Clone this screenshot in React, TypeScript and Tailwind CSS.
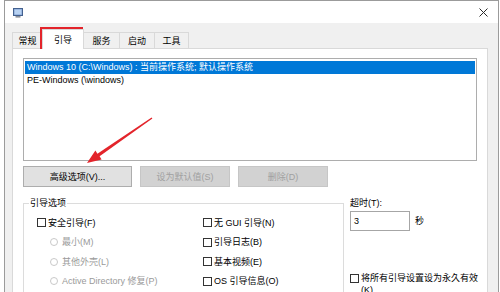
import React from "react";

function Check({ label }: { label: string }) {
  return (
    <div className="flex h-[19.5px] items-center">
      <span className="h-[9px] w-[9px] shrink-0 border border-[#333333] bg-white" />
      <span className="ml-[2px] whitespace-nowrap">{label}</span>
    </div>
  );
}

function Radio({ label }: { label: string }) {
  return (
    <div className="flex h-[19.5px] items-center pl-[13px] text-[#9a9a9a]">
      <span className="h-[8px] w-[8px] shrink-0 rounded-full border border-[#c9c9c9] bg-white" />
      <span className="ml-[4px] whitespace-nowrap">{label}</span>
    </div>
  );
}

export default function App() {
  return (
    <div className="relative h-[292px] w-[500px] overflow-hidden bg-white pl-[4px] text-[9px] leading-[12px] text-black font-[family-name:'Liberation_Sans','Noto_Sans_CJK_SC',sans-serif]">
      <div className="flex h-[300px] w-[495px] flex-col border-l border-r border-t border-[#9b9b9b]">
        {/* Title bar */}
        <div className="flex h-[22px] shrink-0 items-center justify-between bg-white pl-[8px] pr-[10px]">
          <svg width="10" height="10" viewBox="0 0 10 10" className="mt-[1px]">
            <rect x="0.5" y="0.5" width="9" height="7" fill="#7f9fd0" stroke="#44618f" />
            <rect x="1.5" y="1.5" width="7" height="5" fill="#b8d2f2" />
            <rect x="2.5" y="8" width="5" height="1.6" fill="#8a8f99" />
          </svg>
          <svg width="9" height="9" viewBox="0 0 9 9">
            <path d="M0.5 0.5 L8.5 8.5 M8.5 0.5 L0.5 8.5" stroke="#2b2b2b" strokeWidth="1" />
          </svg>
        </div>

        {/* Body */}
        <div className="flex flex-1 flex-col bg-[#f0f0f0]">
          {/* Tabs */}
          <div className="flex h-[25px] shrink-0 items-end pl-[7px] pt-[6px]">
            <div className="flex h-[16px] w-[30px] items-center justify-center border-l border-t border-[#d9d9d9] bg-[#f0f0f0]">
              常规
            </div>
            <div className="relative z-10 -mb-px flex h-[20px] w-[42px] items-center justify-center border-l border-r border-t border-[#d9d9d9] bg-white">
              引导
            </div>
            <div className="flex h-[16px] w-[35px] items-center justify-center border-t border-[#d9d9d9] bg-[#f0f0f0]">
              服务
            </div>
            <div className="flex h-[16px] w-[35px] items-center justify-center border-l border-t border-[#d9d9d9] bg-[#f0f0f0]">
              启动
            </div>
            <div className="flex h-[16px] w-[35px] items-center justify-center border-l border-r border-t border-[#d9d9d9] bg-[#f0f0f0]">
              工具
            </div>
          </div>

          {/* Panel */}
          <div className="ml-[7px] w-[476px] flex-1 border border-[#d9d9d9] bg-white pl-[10px] pt-[9px]">
            {/* List box */}
            <div className="h-[103px] w-[454px] border border-[#adadad] px-[1px] pt-[2px]">
              <div className="h-[13px] whitespace-nowrap bg-[#0078d7] pl-[2px] leading-[13px] text-white">
                Windows 10 (C:\Windows) : 当前操作系统; 默认操作系统
              </div>
              <div className="h-[13px] whitespace-nowrap pl-[2px] leading-[13px]">PE-Windows (\windows)</div>
            </div>

            {/* Buttons */}
            <div className="mt-[5px] flex gap-[8px]">
              <div className="flex h-[21px] w-[109px] items-center justify-center border border-[#adadad] bg-[#e1e1e1]">
                高级选项(V)...
              </div>
              <div className="flex h-[21px] w-[90px] items-center justify-center border border-[#c6c6c6] bg-[#d2d2d2] text-[#a0a0a0]">
                设为默认值(S)
              </div>
              <div className="flex h-[21px] w-[90px] items-center justify-center border border-[#c6c6c6] bg-[#d2d2d2] text-[#a0a0a0]">
                删除(D)
              </div>
            </div>

            {/* Lower section */}
            <div className="mt-[10px] flex">
              <fieldset className="h-[110px] w-[321px] shrink-0 border border-[#dcdcdc] p-0">
                <legend className="ml-[5px] px-[1px] leading-[12px]">引导选项</legend>
                <div className="flex pl-[13px] pt-[4px]">
                  <div className="w-[166px] shrink-0">
                    <Check label="安全引导(F)" />
                    <Radio label="最小(M)" />
                    <Radio label="其他外壳(L)" />
                    <Radio label="Active Directory 修复(P)" />
                  </div>
                  <div>
                    <Check label="无 GUI 引导(N)" />
                    <Check label="引导日志(B)" />
                    <Check label="基本视频(E)" />
                    <Check label="OS 引导信息(O)" />
                  </div>
                </div>
              </fieldset>

              <div className="ml-[6px] flex flex-col">
                <div className="leading-[12px]">超时(T):</div>
                <div className="mt-[2px] flex items-center">
                  <div className="flex h-[20px] w-[60px] items-center border border-[#a6a6a6] bg-white pl-[3px]">3</div>
                  <span className="ml-[5px]">秒</span>
                </div>
                <div className="mt-[41px] flex items-start">
                  <span className="mt-[2px] h-[9px] w-[9px] shrink-0 border border-[#333333] bg-white" />
                  <span className="ml-[2px] w-[118px] leading-[12px]">将所有引导设置设为永久有效(K)</span>
                </div>
              </div>
            </div>
          </div>
        </div>
      </div>

      {/* Annotation overlays */}
      <div className="pointer-events-none absolute left-[40px] top-[27px] h-[22px] w-[43px] border-2 border-[#e3242b]" />
      <svg className="pointer-events-none absolute left-0 top-0" width="500" height="292" viewBox="0 0 500 292">
        <polygon
          points="152.4,118.5 99.6,156.3 101.6,159.4 87,163 95.4,150.6 97.4,153.7 151.6,117.4"
          fill="#e3242b"
        />
      </svg>
    </div>
  );
}
